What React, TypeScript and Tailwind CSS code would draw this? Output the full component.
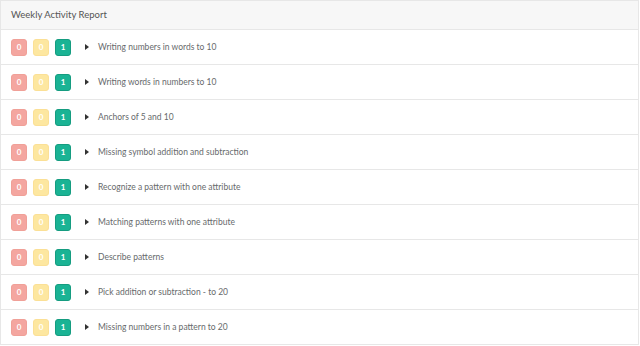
const topics = [
  "Writing numbers in words to 10",
  "Writing words in numbers to 10",
  "Anchors of 5 and 10",
  "Missing symbol addition and subtraction",
  "Recognize a pattern with one attribute",
  "Matching patterns with one attribute",
  "Describe patterns",
  "Pick addition or subtraction - to 20",
  "Missing numbers in a pattern to 20",
];

const Badge = ({ value, className }: { value: number; className: string }) => (
  <span
    className={`flex h-[17px] w-[16px] items-center justify-center rounded-[3px] border text-[8px] font-bold text-white ${className}`}
  >
    {value}
  </span>
);

export default function App() {
  return (
    <div className="h-[346px] w-[640px] bg-white font-['Lato','Open_Sans',sans-serif]">
      <div className="mr-[1px] border border-[#e7e7e7]">
        <div className="flex h-[28px] items-center bg-[#f7f7f7] px-[10px] text-[9.5px] text-[#555]">
          Weekly Activity Report
        </div>
        {topics.map((t) => (
          <div key={t} className="flex h-[35px] items-center border-t border-[#e7e7e7] pl-[10px]">
            <div className="flex gap-[6px]">
              <Badge value={0} className="border-[#f0a098] bg-[#f4a6a0]" />
              <Badge value={0} className="border-[#fbe096] bg-[#fde7a0]" />
              <Badge value={1} className="border-[#159c80] bg-[#1ab394]" />
            </div>
            <span className="ml-[14px] h-0 w-0 border-y-[3px] border-l-[4px] border-y-transparent border-l-[#333]" />
            <span className="ml-[9px] text-[8.5px] text-[#676a6c]">{t}</span>
          </div>
        ))}
      </div>
    </div>
  );
}
